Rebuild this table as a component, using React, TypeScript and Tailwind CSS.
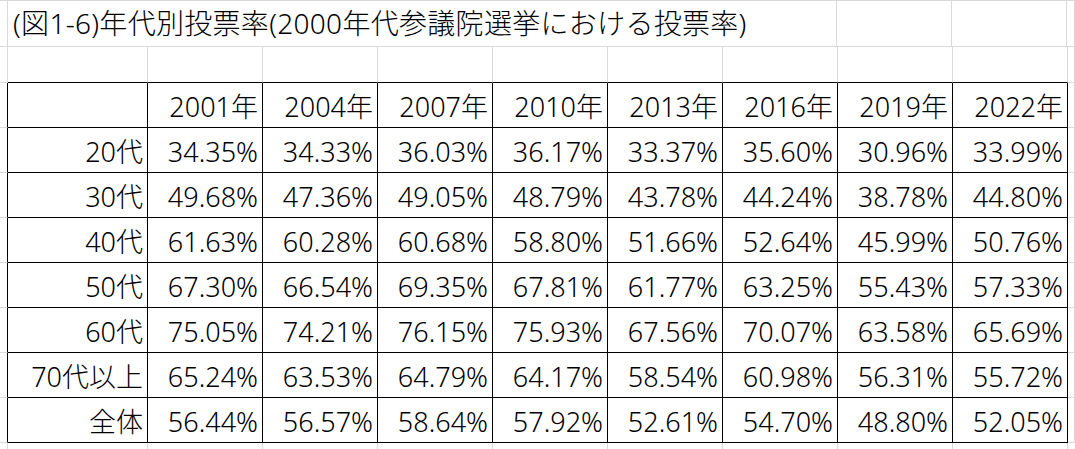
const years = ["2001年", "2004年", "2007年", "2010年", "2013年", "2016年", "2019年", "2022年"];

const rows: { label: string; values: string[] }[] = [
  { label: "20代", values: ["34.35%", "34.33%", "36.03%", "36.17%", "33.37%", "35.60%", "30.96%", "33.99%"] },
  { label: "30代", values: ["49.68%", "47.36%", "49.05%", "48.79%", "43.78%", "44.24%", "38.78%", "44.80%"] },
  { label: "40代", values: ["61.63%", "60.28%", "60.68%", "58.80%", "51.66%", "52.64%", "45.99%", "50.76%"] },
  { label: "50代", values: ["67.30%", "66.54%", "69.35%", "67.81%", "61.77%", "63.25%", "55.43%", "57.33%"] },
  { label: "60代", values: ["75.05%", "74.21%", "76.15%", "75.93%", "67.56%", "70.07%", "63.58%", "65.69%"] },
  { label: "70代以上", values: ["65.24%", "63.53%", "64.79%", "64.17%", "58.54%", "60.98%", "56.31%", "55.72%"] },
  { label: "全体", values: ["56.44%", "56.57%", "58.64%", "57.92%", "52.61%", "54.70%", "48.80%", "52.05%"] },
];

const grid = "border-[#d9d9d9]";

// one table row: edge cell, label cell, 8 value cells, edge cell
const TableRow = ({ label, cells }: { label: string; cells: string[] }) => (
  <div className="flex h-[45px]">
    <div className="w-[8px] shrink-0 border-b border-r border-b-[#d9d9d9] border-r-black" />
    <div className="flex w-[140px] shrink-0 items-center justify-end border-b border-r border-black pr-[4px] pt-[3px]">
      {label}
    </div>
    {cells.map((c, i) => (
      <div
        key={i}
        className="flex w-[115px] shrink-0 items-center justify-end border-b border-r border-black pr-[4px] pt-[3px]"
      >
        {c}
      </div>
    ))}
    <div className={`flex-1 border-b border-r ${grid}`} />
  </div>
);

export default function App() {
  return (
    <div
      className="h-[449px] w-[1075px] overflow-hidden border-t border-[#d9d9d9] bg-white text-[27px] font-light leading-none text-black"
      style={{ fontFamily: '"Noto Sans", "Noto Sans CJK JP", sans-serif' }}
    >
      {/* title row: text overflows across the first cells */}
      <div className="flex h-[46px]">
        <div className={`w-[8px] shrink-0 border-b border-r ${grid}`} />
        <div className={`flex w-[829px] shrink-0 items-center whitespace-nowrap border-b border-r ${grid} pl-[5px] pb-[1px] text-[28px] tracking-[0.3px]`}>
          (図1-6)年代別投票率(2000年代参議院選挙における投票率)
        </div>
        <div className={`w-[115px] shrink-0 border-b border-r ${grid}`} />
        <div className={`w-[115px] shrink-0 border-b border-r ${grid}`} />
        <div className={`flex-1 border-b border-r ${grid}`} />
      </div>

      {/* empty spacer row */}
      <div className="flex h-[36px]">
        <div className={`w-[8px] shrink-0 border-b border-r ${grid}`} />
        <div className="w-[140px] shrink-0 border-b border-r border-b-black border-r-[#d9d9d9]" />
        {years.map((y) => (
          <div key={y} className="w-[115px] shrink-0 border-b border-r border-b-black border-r-[#d9d9d9]" />
        ))}
        <div className={`flex-1 border-b border-r ${grid}`} />
      </div>

      <TableRow label="" cells={years} />
      {rows.map((r) => (
        <TableRow key={r.label} label={r.label} cells={r.values} />
      ))}

      {/* row under the table */}
      <div className="flex h-[10px]">
        <div className={`w-[8px] shrink-0 border-r ${grid}`} />
        <div className={`w-[140px] shrink-0 border-r ${grid}`} />
        {years.map((y) => (
          <div key={y} className={`w-[115px] shrink-0 border-r ${grid}`} />
        ))}
        <div className="flex-1" />
      </div>
    </div>
  );
}
